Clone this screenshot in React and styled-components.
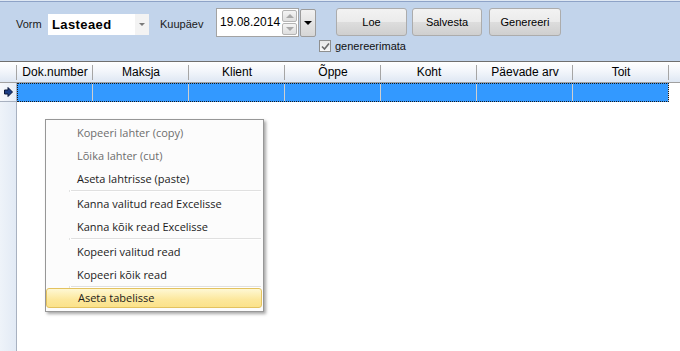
import React from "react"
import styled, { createGlobalStyle } from "styled-components"

const GlobalStyle = createGlobalStyle`
  html, body {
    margin: 0;
    padding: 0;
  }
  body {
    font-family: "Liberation Sans", Arial, sans-serif;
    background: #fff;
  }
`

const Window = styled.div`
  position: relative;
  width: 680px;
  height: 351px;
  overflow: hidden;
  display: flex;
  flex-direction: column;
  background: #fff;
`

const TopStrip = styled.div`
  height: 1px;
  background: #dfe8f3;
  border-bottom: 1px solid #8ea3c7;
`

const Toolbar = styled.div`
  height: 59px;
  background: #c2d4eb;
  display: flex;
  flex-direction: column;
`

const ToolRow = styled.div`
  display: flex;
  align-items: flex-start;
  padding-top: ${p => p.$top || 0}px;
  padding-left: ${p => p.$left || 0}px;
`

const Label = styled.span`
  width: ${p => p.$w}px;
  margin-left: ${p => p.$ml || 0}px;
  margin-top: 10px;
  font-size: 11px;
  line-height: 13px;
  color: #1a1a1a;
`

const Combo = styled.div`
  margin-top: 6px;
  width: 101px;
  height: 21px;
  background: #fff;
  display: flex;
  align-items: center;
`

const ComboText = styled.span`
  flex: 1;
  padding-left: 4px;
  font-size: 13px;
  font-weight: bold;
  letter-spacing: 0.4px;
  color: #000;
`

const ComboDrop = styled.span`
  width: 14px;
  height: 21px;
  background: #f3f3f3;
  display: flex;
  align-items: center;
  justify-content: center;

  &::after {
    content: "";
    border-left: 3px solid transparent;
    border-right: 3px solid transparent;
    border-top: 3px solid #7a7a7a;
  }
`

const DateBox = styled.div`
  width: 83px;
  height: 29px;
  box-sizing: border-box;
  border: 1px solid #a3a3a3;
  background: #fff;
  display: flex;
  align-items: stretch;
`

const DateText = styled.span`
  flex: 1;
  padding-left: 3px;
  font-size: 12px;
  line-height: 27px;
  color: #000;
`

const Spinner = styled.div`
  width: 15px;
  display: flex;
  flex-direction: column;
  gap: 1px;
  padding: 1px 1px 1px 0;
`

const SpinButton = styled.span`
  flex: 1;
  box-sizing: border-box;
  border: 1px solid #b4b4b4;
  border-radius: 2px;
  background: linear-gradient(#f4f4f4, #dedede);
  display: flex;
  align-items: center;
  justify-content: center;

  &::after {
    content: "";
    border-left: 4px solid transparent;
    border-right: 4px solid transparent;
    ${p =>
      p.$up
        ? "border-bottom: 4px solid #a8a8a8;"
        : "border-top: 4px solid #a8a8a8;"}
  }
`

const DropButton = styled.span`
  margin: 1px 0 0 1px;
  width: 16px;
  height: 28px;
  box-sizing: border-box;
  border: 1px solid #9c9c9c;
  border-radius: 2px;
  background: linear-gradient(#f1f1f1, #d6d6d6);
  display: flex;
  align-items: center;
  justify-content: center;

  &::after {
    content: "";
    border-left: 4px solid transparent;
    border-right: 4px solid transparent;
    border-top: 4px solid #000;
  }
`

const Button = styled.button`
  margin-left: ${p => p.$ml}px;
  width: ${p => p.$w}px;
  height: 28px;
  box-sizing: border-box;
  border: 1px solid #acacac;
  border-radius: 3px;
  background: linear-gradient(#f2f2f2 0%, #ebebeb 50%, #dddddd 51%, #cfcfcf 100%);
  font-family: "Liberation Sans", Arial, sans-serif;
  font-size: 11px;
  color: #000;
  padding: 0;
`

const CheckWrap = styled.label`
  display: flex;
  align-items: center;
  gap: 4px;
  font-size: 11px;
  color: #111;
`

const CheckBox = styled.span`
  width: 12px;
  height: 12px;
  box-sizing: border-box;
  border: 1px solid #8e8f8f;
  background: linear-gradient(#e8e8e8, #f8f8f8);
  display: flex;
  align-items: center;
  justify-content: center;
`

const Grid = styled.div`
  flex: 1;
  display: flex;
  flex-direction: column;
  border-top: 1px solid #6f6f6f;
`

const HeaderRow = styled.div`
  display: flex;
  height: 20px;
  border-bottom: 1px solid #a0a0a0;
  background: linear-gradient(#ffffff 0%, #f3f6fb 45%, #dee7f3 100%);
`

const HeadCell = styled.div`
  position: relative;
  width: ${p => p.$w}px;
  flex: ${p => (p.$fill ? 1 : "none")};
  font-size: 12px;
  line-height: 20px;
  text-align: center;
  color: #000;

  &::after {
    content: "";
    display: ${p => (p.$fill ? "none" : "block")};
    position: absolute;
    right: 0;
    top: 3px;
    bottom: 2px;
    width: 1px;
    background: #a5a5a5;
  }
`

const DataRow = styled.div`
  display: flex;
  height: 19px;
`

const RowHead = styled.div`
  width: 16px;
  border-right: 1px solid #a8b1c0;
  border-bottom: 1px solid #a8b1c0;
  box-sizing: content-box;
  height: 18px;
  background: linear-gradient(90deg, #f7f9fc, #e6edf7);
  display: flex;
  align-items: center;
  justify-content: center;
`

const Cells = styled.div`
  display: flex;
  outline: 1px dotted #1a1a1a;
  outline-offset: -1px;
  background: #3399ff;
`

const Cell = styled.div`
  width: ${p => p.$w}px;
  box-sizing: border-box;
  border-right: 1px solid #cfcfcf;
`

const Filler = styled.div`
  flex: 1;
  display: flex;
`

const LeftStrip = styled.div`
  width: 16px;
  border-right: 1px solid #a8b1c0;
  background: linear-gradient(90deg, #eef3f9, #e2eaf5);
`

const Menu = styled.div`
  position: absolute;
  left: 45px;
  top: 119px;
  width: 219px;
  box-sizing: border-box;
  border: 1px solid #979797;
  background: #fcfcfc;
  padding: 1px 0 0;
  box-shadow: 2px 2px 3px rgba(0, 0, 0, 0.35);
  font-family: "Open Sans", "Liberation Sans", sans-serif;
`

const Item = styled.div`
  height: 23px;
  display: flex;
  align-items: stretch;
  color: ${p => (p.$disabled ? "#6d6d6d" : "#1b1b1b")};
  font-size: 11px;
`

const ItemBody = styled.div`
  flex: 1;
  display: flex;
  align-items: ${p => (p.$active ? "flex-start" : "center")};
  ${p =>
    p.$active &&
    `
    margin: 0 1px 3px 0;
    border: 1px solid #e3c25f;
    border-radius: 3px;
    background: linear-gradient(#fef8d4, #fce79b 60%, #fbe28a);
  `}
`

const Gutter = styled.span`
  width: 23px;
  border-right: 1px solid ${p => (p.$hide ? "transparent" : "#e2e3e3")};
  box-shadow: ${p => (p.$hide ? "none" : "1px 0 0 #fff")};
`

const ItemText = styled.span`
  padding-left: 7px;
  line-height: ${p => (p.$active ? "18px" : "23px")};
`

const Separator = styled.div`
  display: flex;
  height: 2px;
`

const SepLine = styled.span`
  flex: 1;
  margin-left: 1px;
  margin-right: 2px;
  border-top: 1px solid #e0e0e0;
  border-bottom: 1px solid #fff;
`

const columns = [
  { title: "Dok.number", w: 76 },
  { title: "Maksja", w: 96 },
  { title: "Klient", w: 96 },
  { title: "Õppe", w: 96 },
  { title: "Koht", w: 96 },
  { title: "Päevade arv", w: 96 },
  { title: "Toit", w: 96 },
]

const menu = [
  { text: "Kopeeri lahter (copy)", disabled: true },
  { text: "Lõika lahter (cut)", disabled: true },
  { text: "Aseta lahtrisse (paste)" },
  { sep: true },
  { text: "Kanna valitud read Excelisse" },
  { text: "Kanna kõik read Excelisse" },
  { sep: true },
  { text: "Kopeeri valitud read" },
  { text: "Kopeeri kõik read" },
  { sep: true },
  { text: "Aseta tabelisse", active: true },
]

const RowArrow = () => (
  <svg width="9" height="10" viewBox="0 0 9 10">
    <polygon
      points="0.5,3 4,3 4,0.5 8.5,5 4,9.5 4,7 0.5,7"
      fill="#1d3f86"
      stroke="#0b1638"
      strokeWidth="1"
    />
  </svg>
)

const Check = () => (
  <svg width="9" height="9" viewBox="0 0 9 9">
    <path d="M1 4.5 L3.5 7 L8 1.5" fill="none" stroke="#6b6b6b" strokeWidth="1.6" />
  </svg>
)

const App = () => {
  return (
    <Window>
      <GlobalStyle />
      <TopStrip />
      <Toolbar>
        <ToolRow $top={6}>
          <Label $ml={16} $w={32}>Vorm</Label>
          <Combo>
            <ComboText>Lasteaed</ComboText>
            <ComboDrop />
          </Combo>
          <Label $ml={11} $w={56}>Kuupäev</Label>
          <DateBox>
            <DateText>19.08.2014</DateText>
            <Spinner>
              <SpinButton $up />
              <SpinButton />
            </Spinner>
          </DateBox>
          <DropButton />
          <Button $ml={20} $w={71}>Loe</Button>
          <Button $ml={5} $w={70}>Salvesta</Button>
          <Button $ml={7} $w={72}>Genereeri</Button>
        </ToolRow>
        <ToolRow $top={3} $left={319}>
          <CheckWrap>
            <CheckBox>
              <Check />
            </CheckBox>
            genereerimata
          </CheckWrap>
        </ToolRow>
      </Toolbar>
      <Grid>
        <HeaderRow>
          <HeadCell $w={17} />
          {columns.map(c => (
            <HeadCell key={c.title} $w={c.w}>
              {c.title}
            </HeadCell>
          ))}
          <HeadCell $fill />
        </HeaderRow>
        <DataRow>
          <RowHead>
            <RowArrow />
          </RowHead>
          <Cells>
            {columns.map(c => (
              <Cell key={c.title} $w={c.w} />
            ))}
          </Cells>
        </DataRow>
        <Filler>
          <LeftStrip />
        </Filler>
      </Grid>
      <Menu>
        {menu.map((m, i) =>
          m.sep ? (
            <Separator key={i}>
              <Gutter />
              <SepLine />
            </Separator>
          ) : (
            <Item key={i} $disabled={m.disabled}>
              <ItemBody $active={m.active}>
                <Gutter $hide={m.active} />
                <ItemText $active={m.active}>{m.text}</ItemText>
              </ItemBody>
            </Item>
          )
        )}
      </Menu>
    </Window>
  )
}

export default App
